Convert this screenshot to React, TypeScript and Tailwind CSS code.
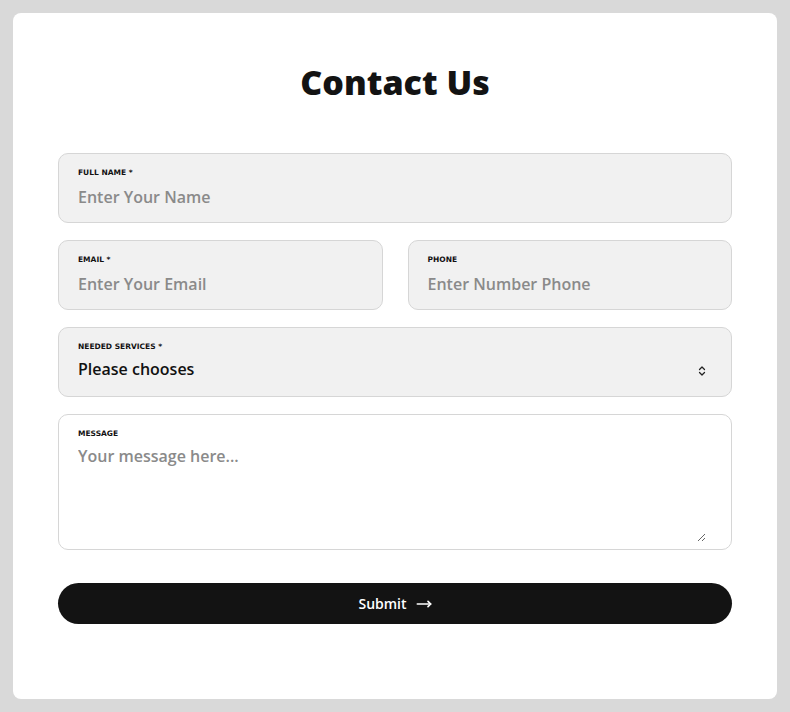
import { MoveRight, ChevronsUpDown } from "lucide-react";

const font = { fontFamily: '"Open Sans", "DejaVu Sans", sans-serif' };
const labelFont = { fontFamily: '"DejaVu Sans", sans-serif', fontSize: "7.5px" };

const Field = ({ label, placeholder }: { label: string; placeholder: string }) => (
  <div className="flex h-[70px] min-w-0 flex-1 flex-col rounded-[10px] border border-[#d6d6d6] bg-[#f1f1f1] px-[19px] pt-[14px]">
    <span className="font-bold uppercase leading-[10px] text-[#111]" style={labelFont}>
      {label}
    </span>
    <span className="mt-[8px] text-[16px] font-semibold leading-[22px] text-[#8a8a8a]">{placeholder}</span>
  </div>
);

const App = () => {
  return (
    <div className="min-h-[712px] bg-[#d9d9d9] p-[13px]" style={font}>
      <div className="flex h-[686px] flex-col rounded-[8px] bg-white px-[45px] pt-[49px]">
        <h1 className="text-center text-[34px] font-extrabold leading-[40px] text-[#131313]">Contact Us</h1>
        <div className="mt-[51px] flex flex-col gap-[17px]">
          <div className="flex">
            <Field label="Full Name *" placeholder="Enter Your Name" />
          </div>
          <div className="flex gap-[25px]">
            <Field label="Email *" placeholder="Enter Your Email" />
            <Field label="Phone" placeholder="Enter Number Phone" />
          </div>
          <div className="relative flex h-[70px] flex-col rounded-[10px] border border-[#d6d6d6] bg-[#f1f1f1] px-[19px] pt-[14px]">
            <span className="font-bold uppercase leading-[10px] text-[#111]" style={labelFont}>
              Needed Services *
            </span>
            <span className="mt-[6px] text-[16px] font-semibold leading-[22px] text-[#111]">Please chooses</span>
            <ChevronsUpDown className="absolute right-[23px] top-[37px] h-[12px] w-[12px] text-[#222]" strokeWidth={2.5} />
          </div>
          <div className="flex h-[136px] flex-col rounded-[10px] border border-[#d6d6d6] bg-white pl-[19px] pr-[25px] pt-[14px]">
            <span className="font-bold uppercase leading-[10px] text-[#111]" style={labelFont}>
              Message
            </span>
            <textarea
              placeholder="Your message here..."
              className="mt-[6px] h-[97px] resize-y bg-transparent text-[16px] font-semibold leading-[22px] text-[#111] outline-none placeholder:text-[#8a8a8a]"
              style={font}
            />
          </div>
        </div>
        <button className="mt-[33px] flex h-[41px] items-center justify-center gap-[9px] rounded-full bg-[#131313] text-[14px] font-semibold text-white">
          Submit
          <MoveRight className="h-[16px] w-[16px]" strokeWidth={2.5} />
        </button>
      </div>
    </div>
  );
};

export default App;
